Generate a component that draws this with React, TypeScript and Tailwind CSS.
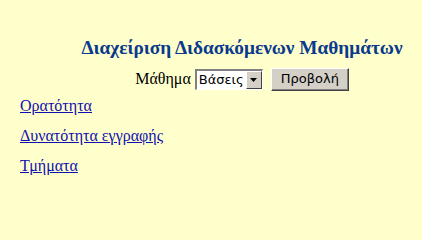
export default function App() {
  return (
    <div className="min-h-screen w-full bg-[#ffffcc] overflow-hidden font-['Liberation_Serif','DejaVu_Serif',serif]">
      <div className="fixed inset-0 -z-10 bg-[#ffffcc]" />
      <div className="pl-[62px] pt-[37px] flex flex-col items-center">
        <h3 className="text-[19.3px] leading-[22px] font-bold text-[#0a3a8c]">
          Διαχείριση Διδασκόμενων Μαθημάτων
        </h3>
        <div className="mt-[8px] flex items-center text-[16px] text-black">
          <span className="mr-[4px]">Μάθημα</span>
          <div className="flex items-stretch h-[21px] w-[68px] border-t-2 border-l-2 border-[#808080] border-r border-b border-r-white border-b-white bg-white">
            <span className="flex-1 pl-[2px] text-[13px] leading-[18px] font-['DejaVu_Sans','Liberation_Sans',sans-serif]">
              Βάσεις
            </span>
            <span className="w-[16px] bg-[#d4d0c8] border-t border-l border-white border-r border-b border-r-[#404040] border-b-[#404040] flex items-center justify-center">
              <svg width="7" height="4" viewBox="0 0 7 4">
                <path d="M0 0h7L3.5 4z" fill="#000" />
              </svg>
            </span>
          </div>
          <button className="ml-[8px] h-[23px] w-[78px] bg-[#d4d0c8] text-[13px] text-black border border-t-white border-l-white border-r-[#404040] border-b-[#404040] shadow-[inset_-1px_-1px_0_#808080] font-['DejaVu_Sans','Liberation_Sans',sans-serif]">
            Προβολή
          </button>
        </div>
      </div>
      <div className="pl-[20px] pt-[6px] flex flex-col gap-[12px] text-[16px] leading-[18px]">
        <a href="#" className="text-[#1010b0] underline w-fit">Ορατότητα</a>
        <a href="#" className="text-[#1010b0] underline w-fit">Δυνατότητα εγγραφής</a>
        <a href="#" className="text-[#1010b0] underline w-fit">Τμήματα</a>
      </div>
    </div>
  );
}
